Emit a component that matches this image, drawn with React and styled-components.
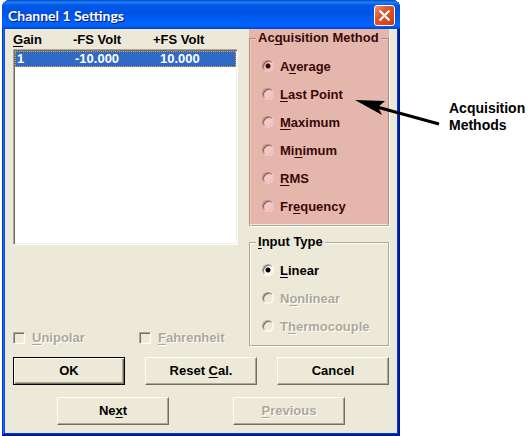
import React from 'react'
import styled, { createGlobalStyle } from 'styled-components'

const methods = [
  { pre: 'A', key: 'v', post: 'erage' },
  { pre: '', key: 'L', post: 'ast Point' },
  { pre: '', key: 'M', post: 'aximum' },
  { pre: 'Mi', key: 'n', post: 'imum' },
  { pre: '', key: 'R', post: 'MS' },
  { pre: 'Fr', key: 'e', post: 'quency' },
]

const inputTypes = [
  { pre: '', key: 'L', post: 'inear' },
  { pre: 'N', key: 'o', post: 'nlinear', disabled: true },
  { pre: 'T', key: 'h', post: 'ermocouple', disabled: true },
]

const Caption = ({ pre, letter, post }) => (
  <span>{pre}<Mnemonic>{letter}</Mnemonic>{post}</span>
)

const RadioList = ({ name, items }) => items.map((item, i) => (
  <RadioRow key={i} $disabled={item.disabled}>
    <Radio type="radio" name={name} defaultChecked={i === 0} disabled={item.disabled} />
    <Caption pre={item.pre} letter={item.key} post={item.post} />
  </RadioRow>
))

const App = () => (
  <Page>
    <GlobalStyle />
    <Dialog role="dialog" aria-labelledby="dialog-title">
      <TitleBar>
        <Title id="dialog-title">Channel 1 Settings</Title>
        <CloseButton type="button" aria-label="Close">
          <svg width="13" height="13" viewBox="0 0 13 13">
            <path d="M1.5 1.5L11.5 11.5M11.5 1.5L1.5 11.5" stroke="#fff" strokeWidth="2.2" />
          </svg>
        </CloseButton>
      </TitleBar>
      <Body>
        <Columns>
          <LeftColumn>
            <GainTable>
              <thead>
                <HeadRow>
                  <th><Mnemonic>G</Mnemonic>ain</th>
                  <th>-FS Volt</th>
                  <th>+FS Volt</th>
                </HeadRow>
              </thead>
              <ListBox>
                <SelectedRow>
                  <td>1</td>
                  <td>-10.000</td>
                  <td>10.000</td>
                </SelectedRow>
              </ListBox>
            </GainTable>
            <CheckRow>
              <CheckLabel>
                <Checkbox type="checkbox" disabled />
                <Caption letter="U" post="nipolar" />
              </CheckLabel>
              <CheckLabel>
                <Checkbox type="checkbox" disabled />
                <Caption letter="F" post="ahrenheit" />
              </CheckLabel>
            </CheckRow>
          </LeftColumn>
          <RightColumn>
            <Highlight>
              <Group>
                <Legend>Ac<Mnemonic>q</Mnemonic>uisition Method</Legend>
                <RadioList name="method" items={methods} />
              </Group>
            </Highlight>
            <Group>
              <Legend><Mnemonic>I</Mnemonic>nput Type</Legend>
              <RadioList name="input-type" items={inputTypes} />
            </Group>
          </RightColumn>
        </Columns>
        <ButtonGrid>
          <DefaultButton type="button">OK</DefaultButton>
          <Button type="button"><Caption pre="Reset " letter="C" post="al." /></Button>
          <Button type="button">Cancel</Button>
        </ButtonGrid>
        <NavRow>
          <Button type="button"><Caption pre="Ne" letter="x" post="t" /></Button>
          <Button type="button" disabled><Caption letter="P" post="revious" /></Button>
        </NavRow>
      </Body>
    </Dialog>
    <Callout>
      <Arrow width="86" height="28" viewBox="0 0 86 28" aria-hidden="true">
        <path d="M22 8L84 25" stroke="#000" strokeWidth="3" />
        <path d="M0 1L30 2L23 8L27 16Z" />
      </Arrow>
      Acquisition Methods
    </Callout>
  </Page>
)

export default App

const GlobalStyle = createGlobalStyle`
  * {
    box-sizing: border-box;
  }
  body {
    margin: 0;
    background: #fff;
    color: #000;
    font: bold 13px/16px "Liberation Sans", Arial, sans-serif;
  }
`

const Page = styled.main`
  display: flex;
  align-items: flex-start;
  padding-left: 2px;
`

const Dialog = styled.section`
  flex: 1;
  min-width: 0;
  padding: 0 3px 3px;
  border-radius: 8px 8px 0 0;
  background: #ece9d8;
  box-shadow: inset -1px -1px #00138c, inset 1px 1px #0831d9,
    inset -2px -2px #001ea0, inset 2px 2px #166bee,
    inset -3px -3px #003bda, inset 3px 3px #0855dd;
`

const TitleBar = styled.header`
  display: flex;
  align-items: center;
  justify-content: space-between;
  height: 29px;
  margin: 0 -3px;
  padding: 2px 5px 0 6px;
  border-radius: 8px 8px 0 0;
  background: linear-gradient(180deg, #0048c8, #2080f8 8%, #0058e8 18%, #0052e4 45%, #0062fc 80%, #0062fc 90%, #0040c8);
`

const Title = styled.h1`
  margin: 0;
  color: #fff;
  font: bold 14px/18px Lato, "Open Sans", sans-serif;
  text-shadow: 1px 1px #0a1883;
`

const CloseButton = styled.button`
  display: flex;
  align-items: center;
  justify-content: center;
  width: 21px;
  height: 21px;
  padding: 0;
  border: 1px solid #fff;
  border-radius: 3px;
  background: linear-gradient(135deg, #ec9078, #e0532c 40%, #d84818 75%, #b83c14);
`

const Body = styled.div`
  padding: 0 8px 8px;
`

const Columns = styled.div`
  display: flex;
  gap: 11px;
`

const LeftColumn = styled.div`
  display: flex;
  flex: 1;
  flex-direction: column;
  justify-content: space-between;
  padding-top: 2px;
`

const RightColumn = styled.div`
  display: flex;
  flex-direction: column;
  gap: 7px;
  width: 140px;
`

const GainTable = styled.table`
  display: block;

  thead {
    display: block;
  }
  th,
  td {
    padding: 0;
    text-align: left;
  }
`

const HeadRow = styled.tr`
  display: grid;
  grid-template-columns: 60px 80px 1fr;
  height: 18px;
  line-height: 18px;
`

const ListBox = styled.tbody`
  display: block;
  height: 196px;
  border: 1px solid;
  border-color: #aca899 #fff #fff #aca899;
  background: #fff;
  box-shadow: inset 1px 1px #716f64, inset -1px -1px #f1efe2;
  padding: 1px;
`

const SelectedRow = styled.tr`
  display: grid;
  grid-template-columns: 58px 85px 1fr;
  padding: 0 2px;
  background: #316ac5;
  color: #fff;
  outline: 1px dotted #e0a040;
  outline-offset: -1px;
`

const CheckRow = styled.div`
  display: grid;
  grid-template-columns: 126px 1fr;
`

const disabledText = `
  color: #aca899;
  text-shadow: 1px 1px #fff;
`

const CheckLabel = styled.label`
  display: flex;
  align-items: center;
  gap: 7px;
  ${disabledText}
`

const Checkbox = styled.input`
  appearance: none;
  width: 12px;
  height: 12px;
  margin: 0;
  border: 1px solid;
  border-color: #aca899 #fff #fff #aca899;
  box-shadow: inset 1px 1px #716f64, inset -1px -1px #f1efe2;
`

const Mnemonic = styled.span`
  text-decoration: underline;
  text-decoration-thickness: 1px;
  text-decoration-skip-ink: none;
  text-underline-offset: 2px;
`

const Group = styled.fieldset`
  min-width: 0;
  margin: 0;
  padding: 5px 6px;
  border: 1px solid #aca899;
  box-shadow: inset 1px 1px #fff, 1px 1px #fff;
`

const Legend = styled.legend`
  padding: 0 2px;
  background: #ece9d8;
  line-height: 18px;
`

const Highlight = styled.div`
  position: relative;

  &::after {
    content: '';
    position: absolute;
    inset: 0 0 2px;
    background: rgba(208, 36, 40, 0.25);
    pointer-events: none;
  }
`

const RadioRow = styled.label`
  display: flex;
  align-items: center;
  gap: 6px;
  height: 28px;
  padding-left: 6px;
  line-height: 18px;
  ${props => props.$disabled && disabledText}

  > span {
    padding-top: 2px;
  }
`

const Radio = styled.input`
  appearance: none;
  width: 12px;
  height: 12px;
  margin: 0;
  border: 1px solid;
  border-color: #aca899 #fff #fff #aca899;
  border-radius: 50%;
  background: #fff;
  box-shadow: inset 1px 1px #716f64, inset -1px -1px #f1efe2;

  &:checked {
    background: radial-gradient(circle, #000 2px, #fff 3px);
  }
  &:disabled {
    background: #ece9d8;
  }
`

const ButtonGrid = styled.div`
  display: grid;
  grid-template-columns: repeat(3, 1fr);
  gap: 20px;
  margin-top: 11px;
`

const NavRow = styled.div`
  display: grid;
  grid-template-columns: 1fr 1fr;
  gap: 64px;
  margin-top: 12px;
  padding: 0 44px;
`

const Button = styled.button`
  height: 28px;
  padding: 0;
  border: 1px solid;
  border-color: #fff #716f64 #716f64 #fff;
  background: #ece9d8;
  box-shadow: inset -1px -1px #aca899;
  color: #000;
  font: inherit;

  &:disabled {
    ${disabledText}
  }
`

const DefaultButton = styled(Button)`
  border-color: #000;
  box-shadow: inset 1px 1px #fff, inset -1px -1px #716f64, inset -2px -2px #aca899;
`

const Callout = styled.aside`
  position: relative;
  width: 132px;
  margin-top: 100px;
  padding-left: 49px;
  font-size: 14px;
  line-height: 17px;
`

const Arrow = styled.svg`
  position: absolute;
  top: -1px;
  left: -45px;
`
